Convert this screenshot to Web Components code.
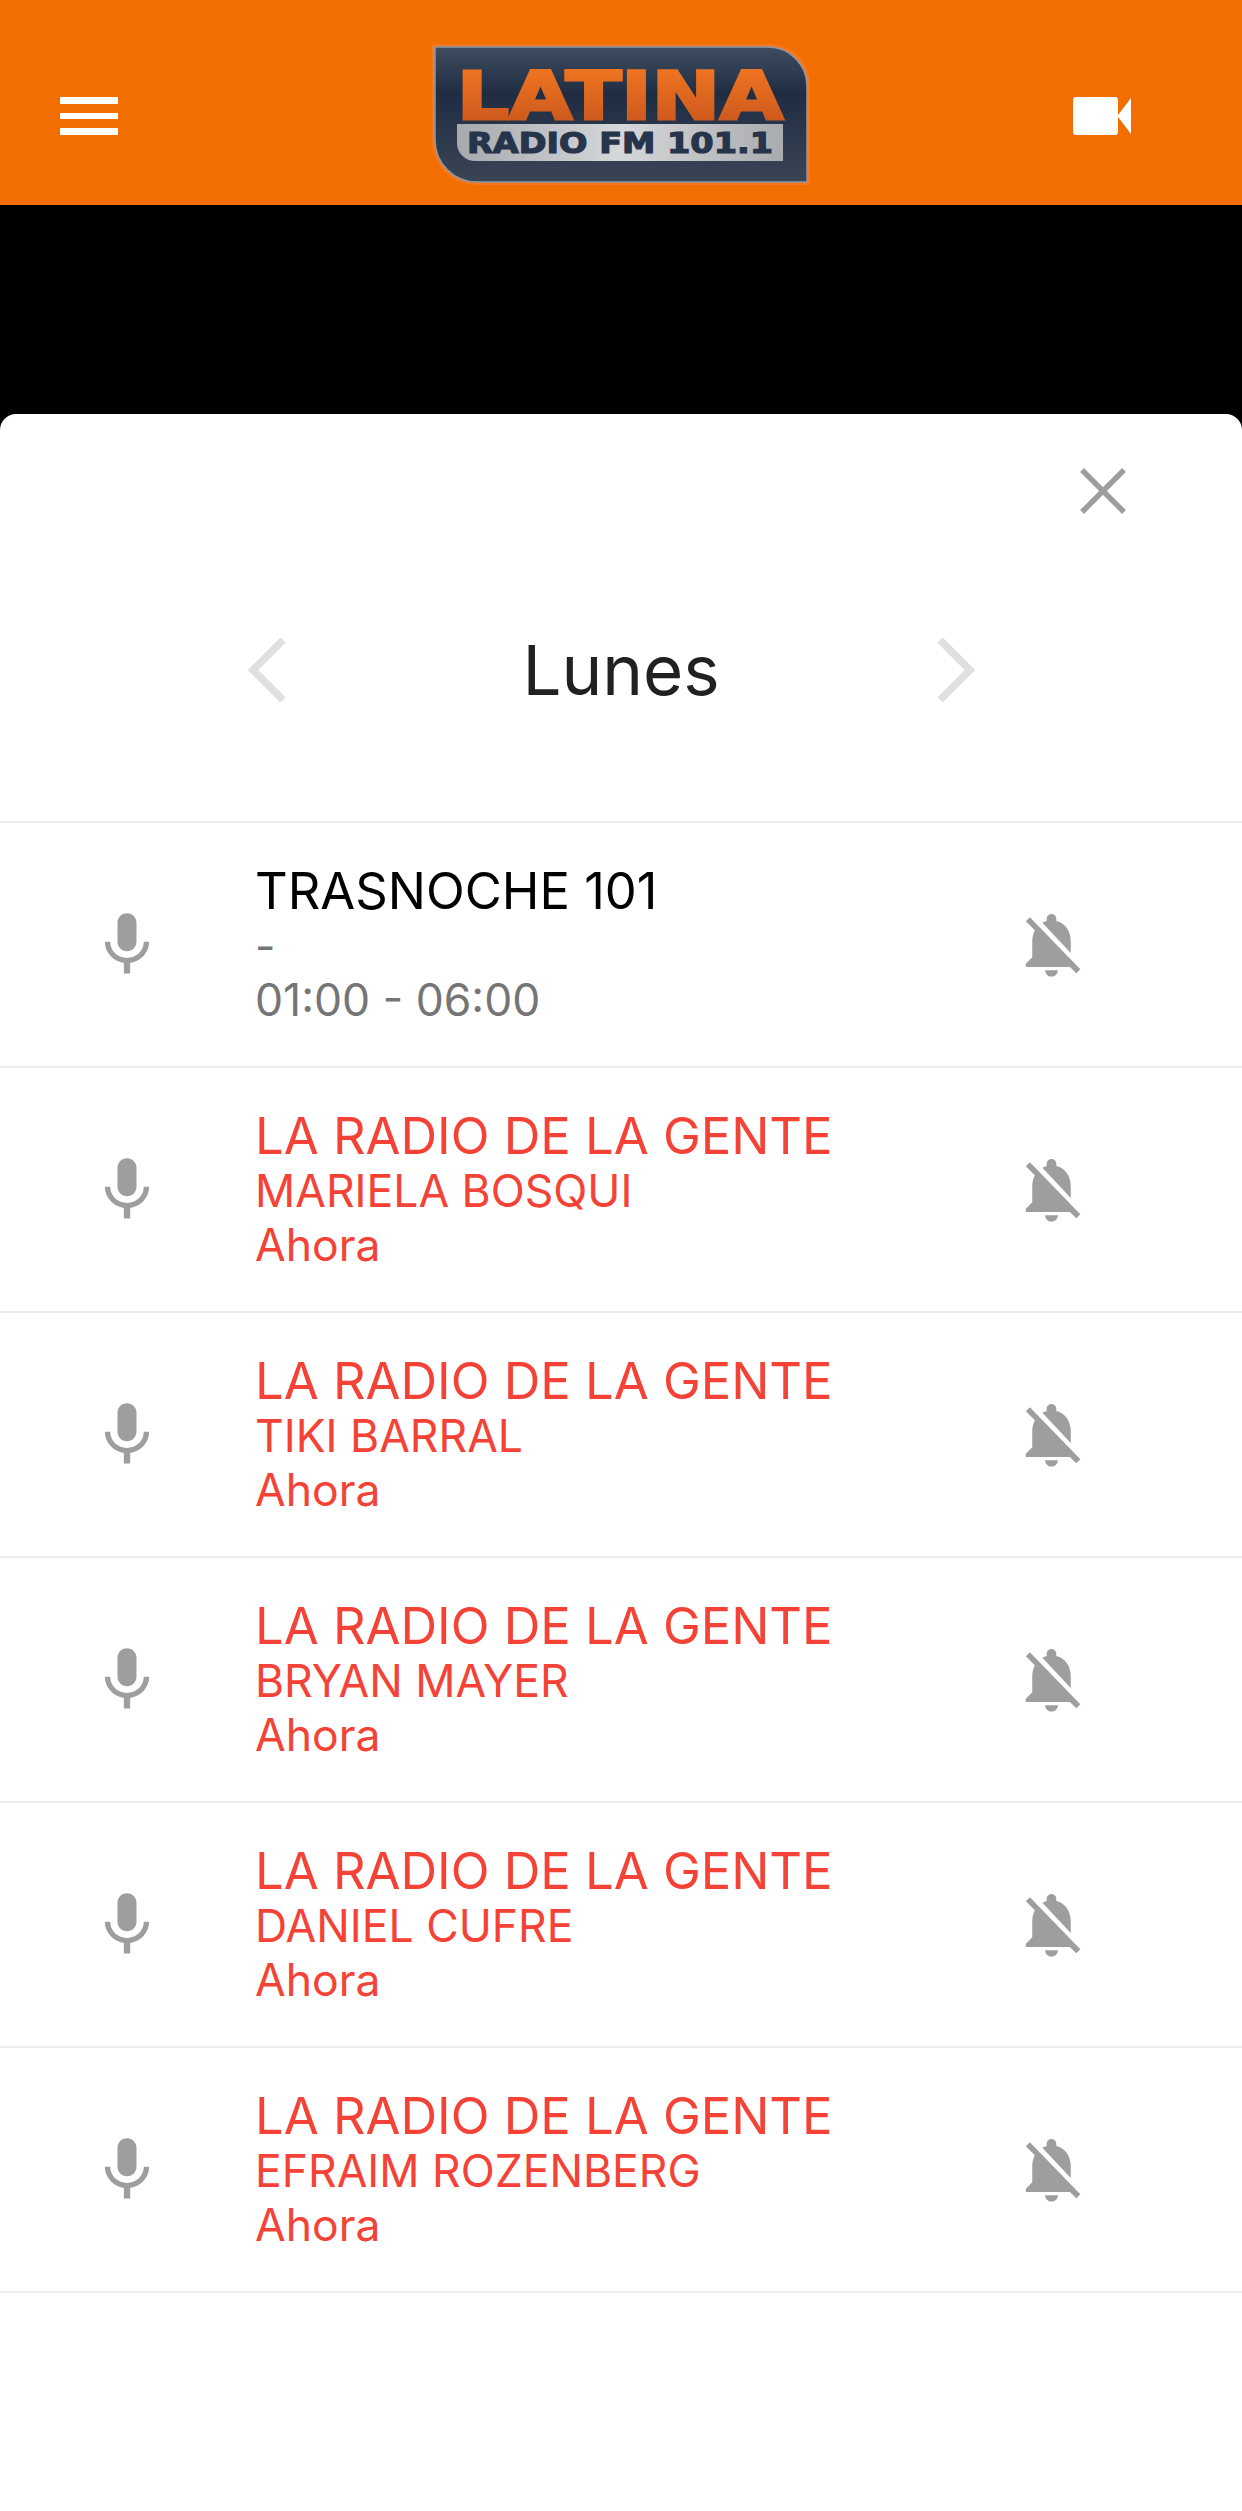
<!DOCTYPE html>
<html lang="es">
<head>
<meta charset="utf-8">
<title>Latina Radio FM 101.1</title>
<style>
  html, body { margin: 0; height: 100%; background: #000; }
  body { font-family: Inter, "Liberation Sans", sans-serif; overflow: hidden; }
  radio-app { height: 2511px; }
</style>
</head>
<body>
<radio-app>
  <app-header slot="header"></app-header>
  <schedule-sheet slot="sheet" day="Lunes">
    <show-row title="TRASNOCHE 101" host="-" time="01:00 - 06:00"></show-row>
    <show-row live title="LA RADIO DE LA GENTE" host="MARIELA BOSQUI" time="Ahora"></show-row>
    <show-row live title="LA RADIO DE LA GENTE" host="TIKI BARRAL" time="Ahora"></show-row>
    <show-row live title="LA RADIO DE LA GENTE" host="BRYAN MAYER" time="Ahora"></show-row>
    <show-row live title="LA RADIO DE LA GENTE" host="DANIEL CUFRE" time="Ahora"></show-row>
    <show-row live title="LA RADIO DE LA GENTE" host="EFRAIM ROZENBERG" time="Ahora"></show-row>
  </schedule-sheet>
</radio-app>

<script>
class RadioApp extends HTMLElement {
  constructor() {
    super();
    this.attachShadow({ mode: 'open' });
    this.shadowRoot.innerHTML = `
      <style>
        :host { display: flex; flex-direction: column; background: #000; }
        .video-gap { height: 209px; background: #000; flex: none; }
        .bottom { flex: 1; display: flex; flex-direction: column; min-height: 0; }
      </style>
      <slot name="header"></slot>
      <div class="video-gap"></div>
      <div class="bottom"><slot name="sheet"></slot></div>
    `;
  }
}

class AppHeader extends HTMLElement {
  constructor() {
    super();
    this.attachShadow({ mode: 'open' });
    this.shadowRoot.innerHTML = `
      <style>
        :host {
          display: grid; grid-template-columns: 1fr auto 1fr; align-items: center;
          height: 205px; background: #f26e00; padding: 27px 58px 0 60px; box-sizing: border-box; flex: none;
        }
        .menu { display: flex; flex-direction: column; gap: 9px; width: 58px; }
        .menu span { height: 6.7px; background: #fff; }
        .logo { display: block; }
        .video { display: block; justify-self: end; margin-right: 53px; }
      </style>
      <div class="menu"><span></span><span></span><span></span></div>
      <svg class="logo" width="384" height="150" viewBox="0 0 384 150">
        <defs>
          <linearGradient id="plate" x1="0" y1="0" x2="0" y2="1">
            <stop offset="0" stop-color="#3f4d60"/>
            <stop offset=".35" stop-color="#1f2c42"/>
            <stop offset="1" stop-color="#3a4656"/>
          </linearGradient>
          <linearGradient id="letters" x1="0" y1="0" x2="0" y2="1">
            <stop offset="0" stop-color="#f67a22"/>
            <stop offset="1" stop-color="#c4521c"/>
          </linearGradient>
          <linearGradient id="silver" x1="0" y1="0" x2="1" y2="0">
            <stop offset="0" stop-color="#a6a9ad"/>
            <stop offset=".5" stop-color="#d6d7d9"/>
            <stop offset="1" stop-color="#a9abae"/>
          </linearGradient>
        </defs>
        <path d="M2 3H340a40 40 0 0 1 40 40V144H46a44 44 0 0 1-44-44Z" fill="#f8823a" opacity=".55"/>
        <path d="M5 6H338a39 39 0 0 1 39 39V141H47a42 42 0 0 1-42-42Z" fill="url(#plate)" stroke="#8d98a3" stroke-width="1.5"/>
        <text x="27" y="78" font-family="'DejaVu Sans'" font-weight="700" font-size="66" textLength="326" lengthAdjust="spacingAndGlyphs" fill="url(#letters)" stroke="url(#letters)" stroke-width="3">LATINA</text>
        <path d="M27 83H353V120H45a18 18 0 0 1-18-18Z" fill="url(#silver)"/>
        <text x="37" y="112" font-family="'DejaVu Sans'" font-weight="700" font-size="29" textLength="306" lengthAdjust="spacingAndGlyphs" fill="#26344c" stroke="#26344c" stroke-width="1.2">RADIO FM 101.1</text>
      </svg>
      <svg class="video" width="58" height="38" viewBox="0 0 58 38">
        <path d="M3 0H42a3 3 0 0 1 3 3V18L58 1V37L45 20V35a3 3 0 0 1-3 3H3a3 3 0 0 1-3-3V3a3 3 0 0 1 3-3Z" fill="#fff"/>
      </svg>
    `;
  }
}

class ScheduleSheet extends HTMLElement {
  constructor() {
    super();
    this.attachShadow({ mode: 'open' });
    this.shadowRoot.innerHTML = `
      <style>
        :host {
          display: flex; flex-direction: column; flex: 1; background: #fff;
          border-radius: 16px 16px 0 0; overflow: hidden;
        }
        .close { display: flex; justify-content: flex-end; padding: 54px 116px 0 0; height: 44px; }
        .close svg { display: block; }
        .day {
          display: flex; align-items: center;
          margin-top: 118px; height: 80px; margin-bottom: 111px; padding-left: 248px;
          font-size: 69px; color: #212121;
        }
        .day span { width: 651px; padding-left: 19px; box-sizing: border-box; text-align: center; }
        .day svg { display: block; flex: none; }
        .list { border-top: 2px solid #eee; }
      </style>
      <div class="close">
        <svg width="46" height="46" viewBox="0 0 46 46"><path d="M2 2 44 44M44 2 2 44" stroke="#9e9e9e" stroke-width="5.5" fill="none"/></svg>
      </div>
      <div class="day">
        <svg width="38" height="64" viewBox="0 0 38 64"><path d="M35 2 5 32 35 62" stroke="#e0e0e0" stroke-width="7.5" fill="none"/></svg>
        <span id="day"></span>
        <svg width="38" height="64" viewBox="0 0 38 64"><path d="M3 2 33 32 3 62" stroke="#e0e0e0" stroke-width="7.5" fill="none"/></svg>
      </div>
      <div class="list"><slot></slot></div>
    `;
    this.shadowRoot.querySelector('#day').textContent = this.getAttribute('day');
  }
}

class ShowRow extends HTMLElement {
  constructor() {
    super();
    this.attachShadow({ mode: 'open' });
    this.shadowRoot.innerHTML = `
      <style>
        :host {
          display: flex; align-items: center; height: 243px;
          border-bottom: 2px solid #eee; padding: 0 152px 0 89px;
        }
        .mic, .bell { flex: none; display: block; fill: #9e9e9e; }
        .text { flex: 1; margin-left: 90px; display: flex; flex-direction: column; color: #757575; }
        .title { font-size: 50.7px; line-height: 57px; color: #000; }
        .sub { font-size: 44.5px; line-height: 54px; }
        :host([live]) .text, :host([live]) .title { color: #f44336; }
      </style>
      <svg class="mic" width="76" height="76" viewBox="0 0 24 24"><path d="M12 14c1.66 0 2.99-1.34 2.99-3L15 5c0-1.66-1.34-3-3-3S9 3.34 9 5v6c0 1.66 1.34 3 3 3zm5.3-3c0 3-2.54 5.1-5.3 5.1S6.7 14 6.7 11H5c0 3.41 2.72 6.23 6 6.72V21h2v-3.28c3.28-.48 6-3.3 6-6.72h-1.7z"/></svg>
      <div class="text">
        <div class="title" id="title"></div>
        <div class="sub" id="host"></div>
        <div class="sub" id="time"></div>
      </div>
      <svg class="bell" width="77" height="77" viewBox="0 0 24 24"><path d="M20 18.69L7.84 6.14 5.27 3.49 4 4.76l2.8 2.8v.01c-.52.99-.8 2.16-.8 3.42v5l-2 2v1h13.73l2 2L21 19.72l-1-1.03zM12 22c1.11 0 2-.89 2-2h-4c0 1.11.89 2 2 2zm6-7.32V11c0-3.08-1.64-5.64-4.5-6.32V4c0-.83-.67-1.5-1.5-1.5s-1.5.67-1.5 1.5v.68c-.15.03-.29.08-.42.12-.1.03-.2.07-.3.11h-.01c-.2.08-.4.17-.59.27-.01 0-.01 0-.02.01L18 14.68z"/></svg>
    `;
    for (const key of ['title', 'host', 'time']) {
      this.shadowRoot.querySelector('#' + key).textContent = this.getAttribute(key);
    }
  }
}

customElements.define('radio-app', RadioApp);
customElements.define('app-header', AppHeader);
customElements.define('schedule-sheet', ScheduleSheet);
customElements.define('show-row', ShowRow);
</script>
</body>
</html>
